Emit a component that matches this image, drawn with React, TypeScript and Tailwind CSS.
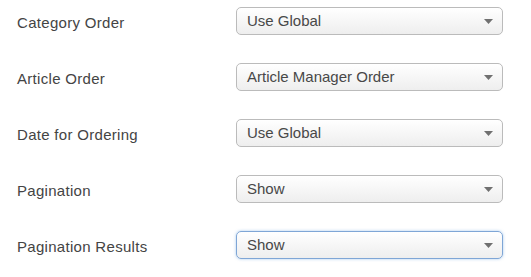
const rows = [
  { label: "Category Order", value: "Use Global" },
  { label: "Article Order", value: "Article Manager Order" },
  { label: "Date for Ordering", value: "Use Global" },
  { label: "Pagination", value: "Show" },
  { label: "Pagination Results", value: "Show", focused: true },
];

function Caret() {
  return (
    <svg width="9" height="5" viewBox="0 0 9 5" className="shrink-0">
      <path d="M0 0h9L4.5 5z" fill="#707070" />
    </svg>
  );
}

export default function App() {
  return (
    <main
      className="h-[277px] w-[531px] bg-white pl-[17px] pt-[7px] text-[15px]"
      style={{ fontFamily: '"Liberation Sans", Arial, sans-serif' }}
    >
      <div className="flex flex-col gap-[28px]">
        {rows.map((row) => (
          <div key={row.label} className="flex h-[28px] items-center">
            <span className="mt-[4px] w-[219px] tracking-[0.3px] text-[#444]">{row.label}</span>
            <div
              className={
                row.focused
                  ? "flex h-[28px] w-[267px] items-center justify-between rounded-[5px] border border-[#7fa6d6] bg-gradient-to-b from-white to-[#eeeeee] pl-[10px] pr-[9px] text-[#484848] shadow-[0_0_3px_rgba(82,150,220,0.5)]"
                  : "flex h-[28px] w-[267px] items-center justify-between rounded-[5px] border border-[#bbbbbb] bg-gradient-to-b from-white to-[#eeeeee] pl-[10px] pr-[9px] text-[#484848] shadow-[inset_0_1px_0_#fff]"
              }
            >
              <span>{row.value}</span>
              <Caret />
            </div>
          </div>
        ))}
      </div>
    </main>
  );
}
